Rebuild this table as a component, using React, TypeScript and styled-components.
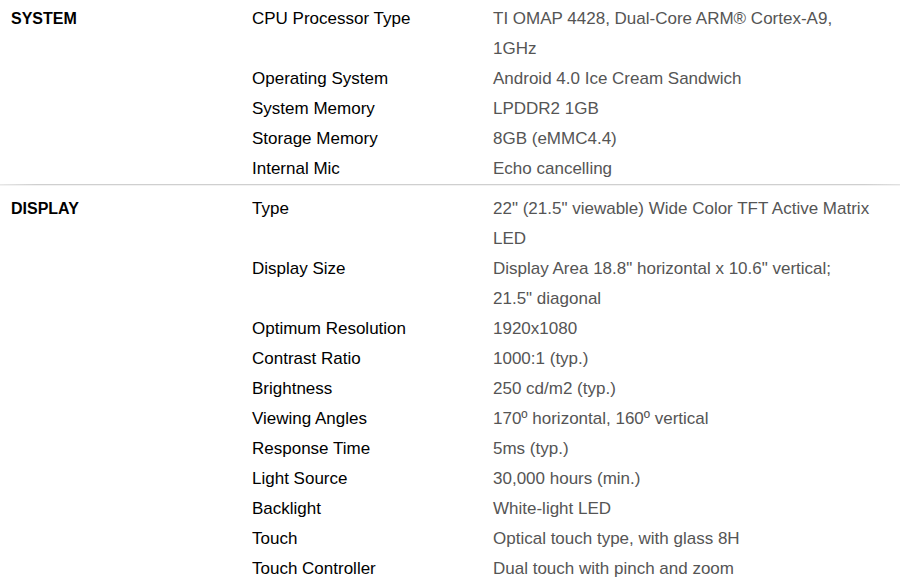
import React from "react";
import styled, { createGlobalStyle } from "styled-components";

const GlobalStyle = createGlobalStyle`
  html, body { margin: 0; padding: 0; background: #fff; }
  body { font-family: "Liberation Sans", Arial, Helvetica, sans-serif; }
`;

type Spec = { name: string; value: string };
type Section = { title: string; specs: Spec[] };

const sections: Section[] = [
  {
    title: "SYSTEM",
    specs: [
      { name: "CPU Processor Type", value: "TI OMAP 4428, Dual-Core ARM® Cortex-A9, 1GHz" },
      { name: "Operating System", value: "Android 4.0 Ice Cream Sandwich" },
      { name: "System Memory", value: "LPDDR2 1GB" },
      { name: "Storage Memory", value: "8GB (eMMC4.4)" },
      { name: "Internal Mic", value: "Echo cancelling" },
    ],
  },
  {
    title: "DISPLAY",
    specs: [
      { name: "Type", value: "22\" (21.5\" viewable) Wide Color TFT Active Matrix LED" },
      { name: "Display Size", value: "Display Area 18.8\" horizontal x 10.6\" vertical; 21.5\" diagonal" },
      { name: "Optimum Resolution", value: "1920x1080" },
      { name: "Contrast Ratio", value: "1000:1 (typ.)" },
      { name: "Brightness", value: "250 cd/m2 (typ.)" },
      { name: "Viewing Angles", value: "170º horizontal, 160º vertical" },
      { name: "Response Time", value: "5ms (typ.)" },
      { name: "Light Source", value: "30,000 hours (min.)" },
      { name: "Backlight", value: "White-light LED" },
      { name: "Touch", value: "Optical touch type, with glass 8H" },
      { name: "Touch Controller", value: "Dual touch with pinch and zoom" },
    ],
  },
];

const Page = styled.div`
  width: 900px;
  font-size: 17px;
  line-height: 30px;
`;

const SectionBlock = styled.section<{ $first?: boolean }>`
  display: grid;
  grid-template-columns: 241px 1fr;
  padding: ${(p) => (p.$first ? "4px" : "8px")} 0 0 11px;
  position: relative;
  margin-bottom: 2px;
  &::after {
    content: "";
    position: absolute;
    left: 0;
    right: 0;
    bottom: -2px;
    height: 2px;
    background: linear-gradient(to right, #e8e8e8 0%, #cfcfcf 4%, #cfcfcf 96%, #e2e2e2 100%);
    border-bottom: 1px solid #f2f2f2;
    box-sizing: border-box;
  }
`;

const SectionTitle = styled.h2`
  margin: 0;
  font-size: 16px;
  font-weight: bold;
  color: #000;
  line-height: 30px;
`;

const SpecList = styled.dl`
  margin: 0;
  display: grid;
  grid-template-columns: 241px 379px;
`;

const SpecName = styled.dt`
  margin: 0;
  color: #000;
`;

const SpecValue = styled.dd`
  margin: 0;
  color: #555;
`;

export default function App() {
  return (
    <>
      <GlobalStyle />
      <Page>
        {sections.map((s, i) => (
          <SectionBlock key={s.title} $first={i === 0}>
            <SectionTitle>{s.title}</SectionTitle>
            <SpecList>
              {s.specs.map((sp) => (
                <React.Fragment key={sp.name}>
                  <SpecName>{sp.name}</SpecName>
                  <SpecValue>{sp.value}</SpecValue>
                </React.Fragment>
              ))}
            </SpecList>
          </SectionBlock>
        ))}
      </Page>
    </>
  );
}
